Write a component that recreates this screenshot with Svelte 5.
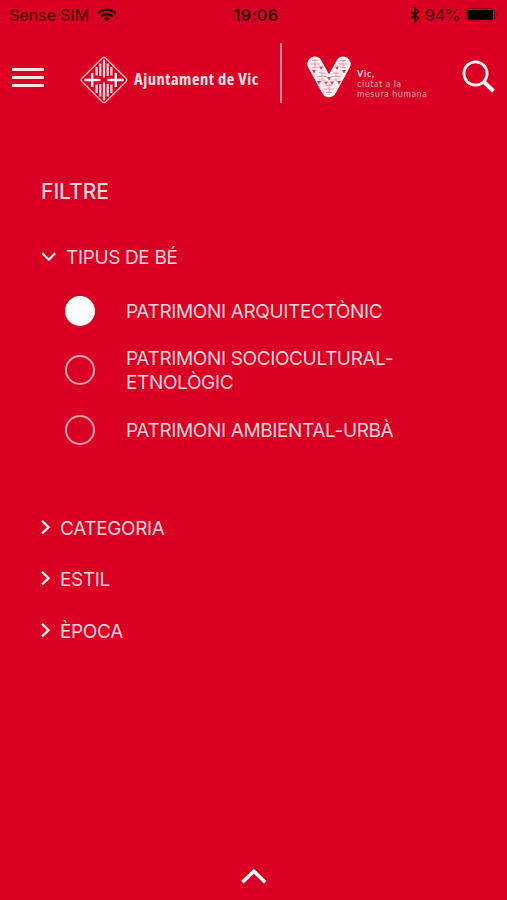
<script lang="ts">
    interface Option {
        id: string;
        label: string;
    }

    const options: Option[] = [
        { id: 'arquitectonic', label: 'PATRIMONI ARQUITECTÒNIC' },
        { id: 'sociocultural', label: 'PATRIMONI SOCIOCULTURAL-ETNOLÒGIC' },
        { id: 'ambiental', label: 'PATRIMONI AMBIENTAL-URBÀ' }
    ];

    const sections = ['CATEGORIA', 'ESTIL', 'ÈPOCA'];

    // centres of the tiles that make up the V
    const tiles = [
        [8, 8], [36, 8], [15, 20.5], [29, 20.5], [22, 33]
    ];

    // gaps between the tiles
    const gaps = [
        [7, 15.5], [14, 12], [37, 15.5], [30, 12], [12, 26.5],
        [22, 22.5], [32, 26.5], [19, 27], [25, 27]
    ];

    let selected = $state('arquitectonic');
    let typeOpen = $state(true);
</script>

<div class="screen">
    <div class="status">
        <div class="status-side">
            <span class="carrier">Sense SIM</span>
            <svg width="20" height="14" viewBox="0 0 20 14" fill="none" stroke="#2c0008" stroke-width="2.7">
                <path d="M1.2 5.2C6 .6 14 .6 18.8 5.2" />
                <path d="M4.2 8.4C7.5 5.3 12.5 5.3 15.8 8.4" />
                <path d="M6.8 10.6C8.6 8.8 11.4 8.8 13.2 10.6L10 13.7Z" fill="#2c0008" stroke="none" />
            </svg>
        </div>
        <span class="time">19:06</span>
        <div class="status-side right">
            <svg width="10" height="16" viewBox="0 0 10 16" fill="none" stroke="#3a000a" stroke-width="1.7">
                <path d="M1 4.5L8.5 11.3L5 14.7V1.3L8.5 4.7L1 11.5" />
            </svg>
            <span class="percent">94%</span>
            <svg width="35" height="14" viewBox="0 0 35 14">
                <rect x=".6" y=".6" width="29" height="12.5" rx="2" fill="none" stroke="#8c0017" />
                <rect x="2.2" y="2" width="25.8" height="9.7" rx="1" fill="#000" />
                <path d="M31.5 4.2C34.2 5.2 34.2 8.5 31.5 9.5Z" fill="#a0001a" />
            </svg>
        </div>
    </div>

    <header>
        <button class="menu" aria-label="Menú">
            <span></span>
            <span></span>
            <span></span>
        </button>

        <svg class="crest" width="48" height="48" viewBox="0 0 48 48" fill="none" stroke="#ffd5da">
            <path d="M22.2 2.2Q24 .6 25.8 2.2L46 22.3Q47.5 24 46 25.7L25.8 45.8Q24 47.4 22.2 45.8L2 25.7Q.5 24 2 22.3Z" stroke-width="1.4" stroke="#ffb5bd" />
            <path d="M16.6 11V19.5M20.3 7.5V20M24 4V21.5M27.7 7.5V20M31.4 11V19.5" stroke-width="2.2" />
            <path d="M16.6 37V28.5M20.3 40.5V28M24 44V26.5M27.7 40.5V28M31.4 37V28.5" stroke-width="2.2" />
            <path d="M4.5 24H20.5M27.5 24H43.5M12.2 17V31M35.8 17V31" stroke-width="2.4" stroke="#fff0f2" />
        </svg>
        <span class="council">Ajuntament de Vic</span>

        <div class="divider"></div>

        <svg class="vic" width="44" height="42" viewBox="0 0 44 42" fill="none">
            <path d="M7.8 8L22 33.8L36.2 8" stroke="#ffeef0" stroke-width="15" stroke-linecap="round" stroke-linejoin="round" />
            {#each tiles as [x, y]}
                <path d="M{x - 5} {y}H{x + 5}M{x - 3} {y - 3.5}H{x + 3}M{x} {y - 5}V{y + 4}M{x - 3} {y + 3.5}H{x + 3}" stroke="#f08d9a" stroke-width=".8" />
            {/each}
            {#each gaps as [x, y]}
                <path d="M{x - 2} {y - 1.4}H{x + 2}L{x} {y + 1.9}Z" fill="#e0405a" />
            {/each}
        </svg>
        <div class="slogan">
            <strong>Vic,</strong>
            <span>ciutat a la</span>
            <span>mesura humana</span>
        </div>

        <button class="search" aria-label="Cerca">
            <svg width="34" height="34" viewBox="0 0 34 34" fill="none" stroke="#fff3f4">
                <circle cx="13.5" cy="13.5" r="11.6" stroke-width="2.8" />
                <path d="M21.8 21.8L31.6 31.2" stroke-width="4" />
            </svg>
        </button>
    </header>

    <main>
        <h1>FILTRE</h1>

        <button class="section type" onclick={() => (typeOpen = !typeOpen)}>
            <svg width="16" height="10" viewBox="0 0 16 10" fill="none" stroke="#ffe9eb" stroke-width="2.2">
                <path d="M1.2 1.2L7.7 7.7L14.2 1.2" />
            </svg>
            <span>TIPUS DE BÉ</span>
        </button>

        {#if typeOpen}
            <div class="options">
                {#each options as option (option.id)}
                    <button class="option" onclick={() => (selected = option.id)}>
                        <span class="radio" class:checked={selected === option.id}></span>
                        <span class="label">{option.label}</span>
                    </button>
                {/each}
            </div>
        {/if}

        <div class="sections">
            {#each sections as name}
                <button class="section">
                    <svg width="11" height="16" viewBox="0 0 11 16" fill="none" stroke="#fff0f1" stroke-width="2.3">
                        <path d="M1 .9L7.6 7.2L1 13.5" />
                    </svg>
                    <span>{name}</span>
                </button>
            {/each}
        </div>
    </main>

    <footer>
        <button aria-label="Tancar">
            <svg width="28" height="17" viewBox="0 0 28 17" fill="none" stroke="#fff" stroke-width="3.5">
                <path d="M2.4 14.3L13.8 3.3L25.2 14.3" />
            </svg>
        </button>
    </footer>
</div>

<style>
    :global(body) {
        margin: 0;
        background: #d90024;
    }

    .screen {
        display: flex;
        flex-direction: column;
        height: 900px;
        box-sizing: border-box;
        background: #d90024;
        color: #ffd3d8;
        font-family: Inter, "Liberation Sans", sans-serif;
        overflow: hidden;
    }

    button {
        display: flex;
        padding: 0;
        border: none;
        background: none;
        color: inherit;
        font: inherit;
        letter-spacing: inherit;
        text-align: left;
        cursor: pointer;
    }

    svg {
        display: block;
        flex: none;
    }

    .status {
        display: grid;
        grid-template-columns: 1fr auto 1fr;
        align-items: center;
        height: 30px;
        padding: 0 7px 0 9px;
        color: #5c000f;
        font-size: 16px;
        line-height: 20px;
    }

    .status-side {
        display: flex;
        align-items: center;
        gap: 8px;
    }

    .status-side.right {
        justify-content: flex-end;
        gap: 5px;
    }

    .carrier {
        font-weight: 450;
        letter-spacing: -0.1px;
    }

    .percent {
        font-weight: 450;
        letter-spacing: -0.4px;
    }

    .time {
        margin-left: 3px;
        color: #3a000a;
        font-weight: 600;
        letter-spacing: 0.4px;
    }

    header {
        display: flex;
        align-items: center;
        height: 94px;
        padding: 0 11px 0 12px;
    }

    .menu {
        flex-direction: column;
        gap: 5px;
        width: 32px;
    }

    .menu span {
        width: 32px;
        height: 3px;
        background: #ffdfe2;
    }

    .crest {
        margin: 5px 0 0 36px;
    }

    .council {
        width: 125px;
        margin: 3px 0 0 6px;
        color: #ffe1e4;
        font-family: "Open Sans", sans-serif;
        font-size: 16.5px;
        font-weight: 700;
        font-stretch: 75%;
        letter-spacing: 0.5px;
        white-space: nowrap;
    }

    .divider {
        width: 2px;
        height: 60px;
        margin: 0 0 8px 21px;
        background: #ef8896;
    }

    .vic {
        margin-left: 25px;
    }

    .slogan {
        display: flex;
        flex-direction: column;
        width: 72px;
        margin: 14px 0 0 6px;
        color: #f5a0ab;
        font-family: Lato, sans-serif;
        font-size: 9px;
        letter-spacing: 0.6px;
        line-height: 10px;
        white-space: nowrap;
    }

    .slogan strong {
        color: #ffdfe2;
        letter-spacing: 0.7px;
    }

    .search {
        margin-left: auto;
    }

    main {
        flex: 1;
        padding: 55px 41px 0;
        font-size: 19px;
        letter-spacing: -0.36px;
        line-height: 24px;
    }

    h1 {
        margin: 0 0 42px;
        font-size: 21px;
        font-weight: 500;
        letter-spacing: 0;
        line-height: 25px;
    }

    .section {
        align-items: center;
        gap: 8px;
    }

    .section svg {
        margin-bottom: 2px;
    }

    .section.type {
        gap: 9px;
    }

    .options {
        display: flex;
        flex-direction: column;
        gap: 23.4px;
        margin: 30px 0 74px 24px;
    }

    .option {
        align-items: center;
        gap: 32px;
        width: 350px;
    }

    .radio {
        flex: none;
        width: 30px;
        height: 30px;
        margin: -4px -1px -2px 0;
        box-sizing: border-box;
        border: 2px solid #f9a3ae;
        border-radius: 50%;
    }

    .radio.checked {
        border-color: #fff;
        background: #fff;
    }

    .label {
        width: 285px;
    }

    .sections {
        display: flex;
        flex-direction: column;
        gap: 27.4px;
    }

    footer {
        display: flex;
        justify-content: center;
        padding-bottom: 15px;
    }
</style>
